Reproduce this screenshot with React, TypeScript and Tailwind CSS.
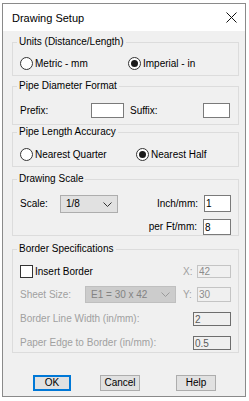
import React from "react";

function Radio({ checked, label }: { checked?: boolean; label: string }) {
  return (
    <div className="flex items-center gap-[2px]">
      <span className="flex h-[13px] w-[13px] shrink-0 items-center justify-center rounded-full border border-[#333333] bg-white">
        {checked && <span className="h-[7px] w-[7px] rounded-full bg-[#1a1a1a]" />}
      </span>
      <span>{label}</span>
    </div>
  );
}

function Chevron({ color }: { color: string }) {
  return (
    <svg width="9" height="5" viewBox="0 0 9 5" fill="none">
      <path d="M0.5 0.5 L4.5 4.5 L8.5 0.5" stroke={color} strokeWidth="1" />
    </svg>
  );
}

function Field({ value, className }: { value: string; className: string }) {
  return (
    <input
      readOnly
      value={value}
      className={`shrink-0 border px-[1px] text-[10px] leading-none outline-none ${className}`}
    />
  );
}

export default function App() {
  return (
    <div
      className="h-[401px] w-[249px] overflow-hidden bg-white pt-[3px] pl-[2px] text-[10px] leading-[12px] text-black"
      style={{ fontFamily: '"Liberation Sans", Arial, sans-serif' }}
    >
      <div className="flex h-[394px] w-[244px] flex-col border border-[#8a8a8a]">
        {/* title bar */}
        <div className="flex h-[27px] shrink-0 items-center justify-between bg-white pl-[9px] pr-[8px]">
          <span className="text-[11px]">Drawing Setup</span>
          <svg width="11" height="11" viewBox="0 0 11 11" fill="none">
            <path d="M0.5 0.5 L10.5 10.5 M10.5 0.5 L0.5 10.5" stroke="#111" strokeWidth="1" />
          </svg>
        </div>

        <div className="flex flex-1 flex-col bg-[#f0f0f0] pt-[5px] pl-[9px] pr-[6px]">
          {/* Units */}
          <fieldset className="h-[40px] border border-[#dcdcdc] px-[7px]">
            <legend className="ml-[-3px] px-[2px] leading-[12px]">Units (Distance/Length)</legend>
            <div className="mt-[9px] flex h-[13px] items-center">
              <div className="w-[108px] shrink-0">
                <Radio label="Metric - mm" />
              </div>
              <Radio checked label="Imperial - in" />
            </div>
          </fieldset>

          {/* Pipe Diameter Format */}
          <fieldset className="mt-[4px] h-[45px] border border-[#dcdcdc] px-[7px]">
            <legend className="ml-[-3px] px-[2px] leading-[12px]">Pipe Diameter Format</legend>
            <div className="mt-[11px] flex h-[15px] items-center">
              <span className="w-[71px] shrink-0">Prefix:</span>
              <Field value="" className="h-[15px] w-[33px] border-[#7a7a7a] bg-white" />
              <span className="ml-[6px] w-[73px] shrink-0">Suffix:</span>
              <Field value="" className="h-[15px] w-[27px] border-[#7a7a7a] bg-white" />
            </div>
          </fieldset>

          {/* Pipe Length Accuracy */}
          <fieldset className="mt-[1px] h-[41px] border border-[#dcdcdc] px-[7px]">
            <legend className="ml-[-3px] px-[2px] leading-[12px]">Pipe Length Accuracy</legend>
            <div className="mt-[10px] flex h-[13px] items-center">
              <div className="w-[116px] shrink-0">
                <Radio label="Nearest Quarter" />
              </div>
              <Radio checked label="Nearest Half" />
            </div>
          </fieldset>

          {/* Drawing Scale */}
          <fieldset className="mt-[6px] h-[63px] border border-[#dcdcdc] px-[7px]">
            <legend className="ml-[-3px] px-[2px] leading-[12px]">Drawing Scale</legend>
            <div className="mt-[10px] flex items-start">
              <div className="flex h-[18px] items-center">
                <span className="w-[40px]">Scale:</span>
                <div className="flex h-[18px] w-[58px] items-center justify-between border border-[#adadad] bg-[#e1e1e1] pl-[5px] pr-[5px]">
                  <span>1/8</span>
                  <Chevron color="#333" />
                </div>
              </div>
              <div className="ml-auto flex flex-col items-end gap-[7px]">
                <div className="flex h-[17px] items-center gap-[6px]">
                  <span>Inch/mm:</span>
                  <Field value="1" className="h-[17px] w-[27px] border-[#7a7a7a] bg-white" />
                </div>
                <div className="flex h-[16px] items-center gap-[6px]">
                  <span>per Ft/mm:</span>
                  <Field value="8" className="h-[16px] w-[28px] border-[#7a7a7a] bg-white" />
                </div>
              </div>
            </div>
          </fieldset>

          {/* Border Specifications */}
          <fieldset className="mt-[7px] h-[110px] border border-[#dcdcdc] px-[7px]">
            <legend className="ml-[-3px] px-[2px] leading-[12px]">Border Specifications</legend>
            <div className="mt-[10px] flex h-[13px] items-center">
              <span className="h-[13px] w-[13px] border border-[#333333] bg-white" />
              <span className="ml-[2px]">Insert Border</span>
              <span className="ml-auto w-[14px] text-[#a0a0a0]">X:</span>
              <Field value="42" className="h-[13px] w-[34px] border-[#c4c4c4] bg-[#f0f0f0] text-[#8c8c8c]" />
            </div>
            <div className="mt-[8px] flex h-[17px] items-center">
              <span className="w-[65px] shrink-0 text-[#a0a0a0]">Sheet Size:</span>
              <div className="flex h-[17px] w-[91px] shrink-0 items-center justify-between border border-[#bfbfbf] bg-[#cccccc] pl-[5px] pr-[5px] text-[#838383]">
                <span>E1 = 30 x 42</span>
                <Chevron color="#9a9a9a" />
              </div>
              <span className="ml-auto w-[14px] text-[#a0a0a0]">Y:</span>
              <Field value="30" className="h-[15px] w-[34px] border-[#c4c4c4] bg-[#f0f0f0] text-[#8c8c8c]" />
            </div>
            <div className="mt-[9px] flex h-[14px] items-center">
              <span className="text-[#a0a0a0]">Border Line Width (in/mm):</span>
              <Field value="2" className="ml-auto h-[14px] w-[38px] border-[#6e6e6e] bg-[#f0f0f0] text-[#5a5a5a]" />
            </div>
            <div className="mt-[10px] flex h-[14px] items-center">
              <span className="text-[#a0a0a0]">Paper Edge to Border (in/mm):</span>
              <Field value="0.5" className="ml-auto h-[14px] w-[38px] border-[#6e6e6e] bg-[#f0f0f0] text-[#5a5a5a]" />
            </div>
          </fieldset>

          {/* buttons */}
          <div className="mt-[22px] flex">
            <button className="ml-[21px] h-[16px] w-[38px] border-2 border-[#0078d7] bg-[#e1e1e1] leading-none">
              OK
            </button>
            <button className="ml-[29px] h-[16px] w-[40px] border border-[#adadad] bg-[#e1e1e1] leading-none">
              Cancel
            </button>
            <button className="ml-[36px] h-[16px] w-[40px] border border-[#adadad] bg-[#e1e1e1] leading-none">
              Help
            </button>
          </div>
        </div>
      </div>
    </div>
  );
}
